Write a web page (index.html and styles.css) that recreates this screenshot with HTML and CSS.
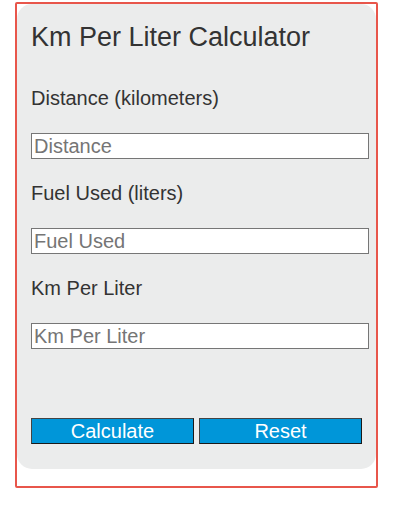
FILE: index.html
```
<!DOCTYPE html>
<html>
<head>
<meta charset="utf-8">
<link rel="stylesheet" href="styles.css">
</head>
<body>
<div class="frame">
  <div class="panel">
    <h1 class="title">Km Per Liter Calculator</h1>
    <label class="label">Distance (kilometers)</label>
    <input class="field" type="text" placeholder="Distance">
    <label class="label">Fuel Used (liters)</label>
    <input class="field" type="text" placeholder="Fuel Used">
    <label class="label">Km Per Liter</label>
    <input class="field" type="text" placeholder="Km Per Liter">
    <div class="buttons">
      <button class="btn">Calculate</button>
      <button class="btn">Reset</button>
    </div>
  </div>
</div>
</body>
</html>
```
FILE: styles.css
```
html, body {
  margin: 0;
  padding: 0;
  background: #ffffff;
}
body {
  font-family: "Liberation Sans", Arial, sans-serif;
}
.frame {
  margin: 2px 0 0 15px;
  width: 359px;
  border: 2px solid #e8564b;
  border-radius: 2px;
  padding-bottom: 17px;
}
.panel {
  background: #ebecec;
  border-radius: 15px;
  padding: 17px 0 25px 14px;
  display: flex;
  flex-direction: column;
  align-items: flex-start;
}
.title {
  margin: 0 0 33px 0;
  font-size: 27px;
  line-height: 32px;
  font-weight: normal;
  color: #333333;
}
.label {
  display: block;
  font-size: 20px;
  line-height: 24px;
  color: #333333;
}
.field {
  box-sizing: border-box;
  width: 338px;
  height: 26px;
  margin: 23px 0 22px 0;
  padding: 0 2px;
  border: 1px solid #767676;
  background: #ffffff;
  font-family: "Liberation Sans", Arial, sans-serif;
  font-size: 20px;
  color: #333;
}
.field::placeholder {
  color: #757575;
}
.buttons {
  display: flex;
  gap: 5px;
  margin-top: 47px;
}
.btn {
  box-sizing: border-box;
  width: 163px;
  height: 26px;
  padding: 0;
  background: #0096d9;
  color: #ffffff;
  border: 1px solid #444;
  border-right-color: #1a1a1a;
  border-bottom-color: #1a1a1a;
  font-family: "Liberation Sans", Arial, sans-serif;
  font-size: 20px;
  line-height: 24px;
}
```
